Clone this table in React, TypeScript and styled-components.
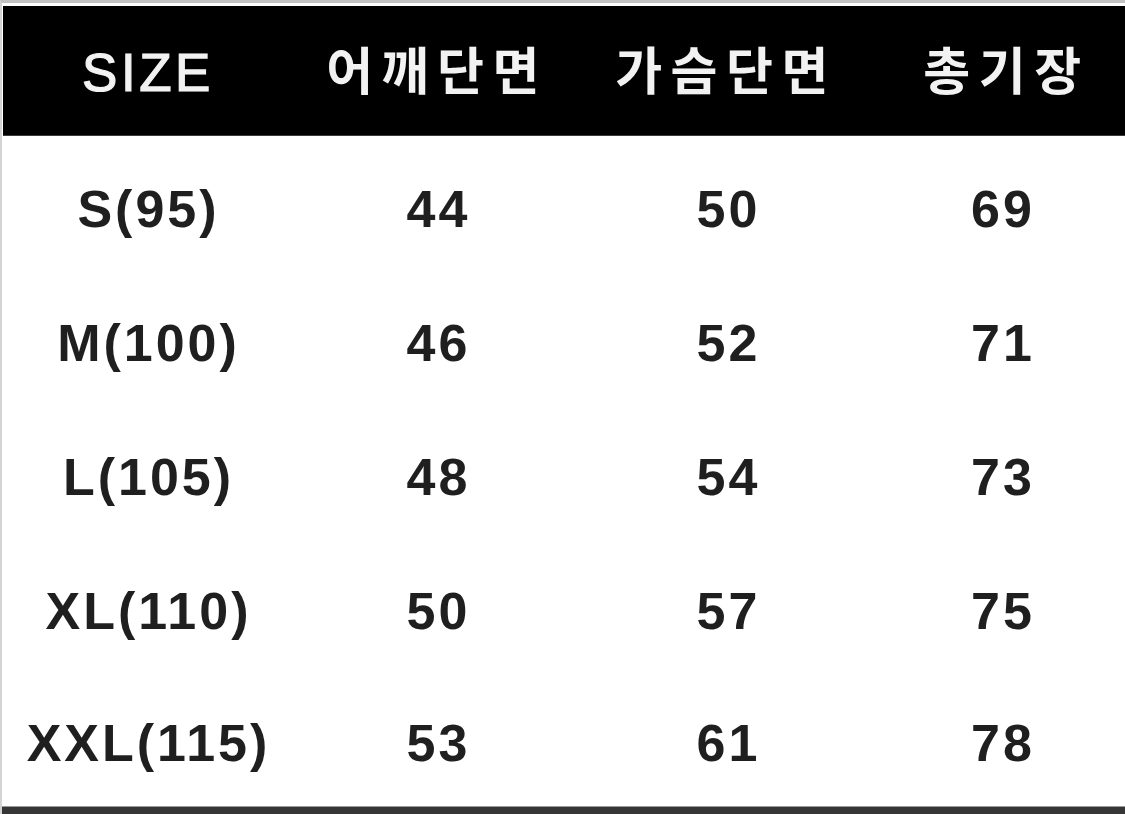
import React from "react";
import styled, { createGlobalStyle } from "styled-components";

const Global = createGlobalStyle`
  html, body { margin: 0; padding: 0; background: #ffffff; overflow: hidden; }
  #root { width: 1125px; height: 814px; }
`;

const Sheet = styled.div`
  width: 1125px;
  height: 814px;
  box-sizing: border-box;
  border-top: 3px solid #c2c2c2;
  border-left: 2px solid #d4d4d4;
  display: flex;
  flex-direction: column;
  background: #fff;
  font-family: "Liberation Sans", "Noto Sans CJK KR", sans-serif;
`;

const HeaderBar = styled.div`
  margin: 3px 0 0 1px;
  height: 129px;
  background: #000;
  display: grid;
  grid-template-columns: 287px 290px 290px 1fr;
  align-items: center;
  border-bottom: 1px solid #3a3a3a;
`;

const HeadCell = styled.div<{ $latin?: boolean; $shift?: number }>`
  color: #f2f2f2;
  text-align: center;
  font-size: ${(p) => (p.$latin ? "53px" : "51px")};
  font-weight: ${(p) => (p.$latin ? 400 : 700)};
  letter-spacing: ${(p) => (p.$latin ? "3.5px" : "8.5px")};
  padding-left: ${(p) => (p.$latin ? "3px" : "8px")};
  line-height: 1;
  padding-top: 4px;
  -webkit-text-stroke: ${(p) => (p.$latin ? "1.2px #f2f2f2" : "0")};
  transform: translateX(${(p) => p.$shift ?? 0}px);
`;

const Body = styled.div`
  flex: 1;
  display: grid;
  grid-template-rows: repeat(4, 134px) 1fr;
  padding-top: 6px;
  border-bottom: 7px solid #363636;
  box-shadow: inset 0 -1px 0 #9a9a9a;
`;

const Row = styled.div`
  display: grid;
  grid-template-columns: 290px 290px 290px 1fr;
  align-items: center;
`;

const Cell = styled.div<{ $shift?: number }>`
  color: #1f1f1f;
  text-align: center;
  font-size: 52px;
  font-weight: 700;
  letter-spacing: 3px;
  padding-left: 3px;
  line-height: 1;
  transform: translateX(${(p) => p.$shift ?? 0}px);
`;

const headers = ["SIZE", "어깨단면", "가슴단면", "총기장"];
const headShift = [0, -2, -3, 5];
const rows: string[][] = [
  ["S(95)", "44", "50", "69"],
  ["M(100)", "46", "52", "71"],
  ["L(105)", "48", "54", "73"],
  ["XL(110)", "50", "57", "75"],
  ["XXL(115)", "53", "61", "78"],
];

export default function App() {
  return (
    <>
      <Global />
      <Sheet>
        <HeaderBar>
          {headers.map((h, i) => (
            <HeadCell key={h} $latin={i === 0} $shift={headShift[i]}>
              {h}
            </HeadCell>
          ))}
        </HeaderBar>
        <Body>
          {rows.map((r) => (
            <Row key={r[0]}>
              {r.map((c, i) => (
                <Cell key={i} $shift={i === 3 ? 3 : 0}>
                  {c}
                </Cell>
              ))}
            </Row>
          ))}
        </Body>
      </Sheet>
    </>
  );
}
